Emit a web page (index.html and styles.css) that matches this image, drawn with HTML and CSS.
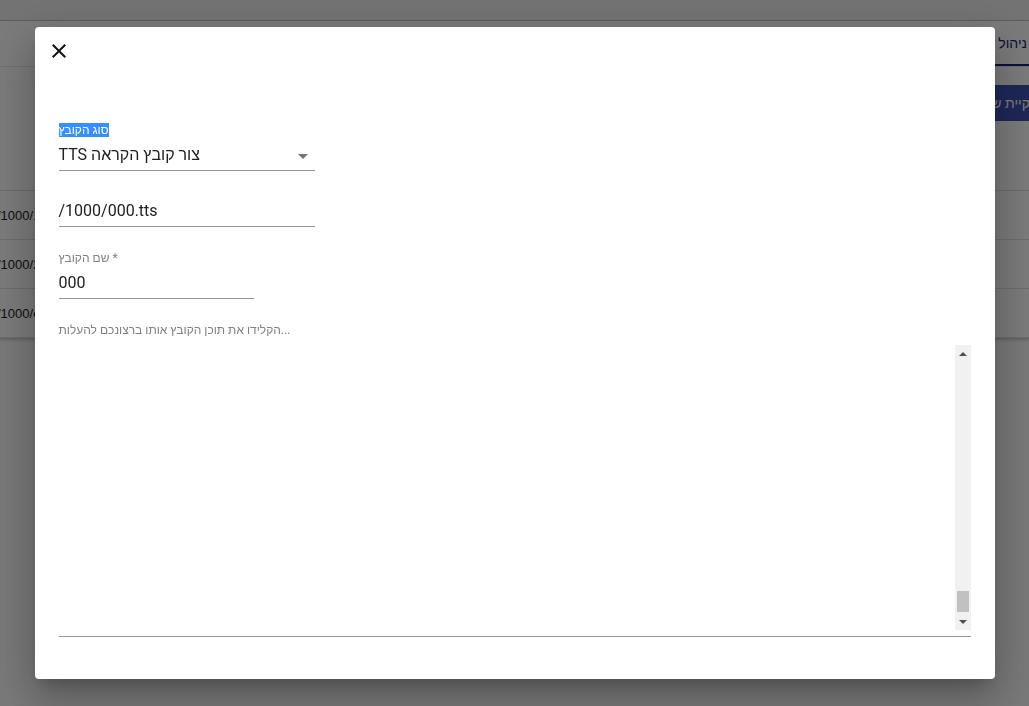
FILE: index.html
```html
<!DOCTYPE html>
<html lang="he">
<head>
    <meta charset="UTF-8">
    <meta name="viewport" content="width=device-width, initial-scale=1.0">
    <title>ניהול קבצים</title>
    <link rel="stylesheet" href="styles.css">
</head>
<body>
    <div class="page" dir="rtl">
        <div class="topbar"></div>
        <div class="card">
            <div class="tabs">
                <span class="tab active">ניהול קבצים</span>
            </div>
            <div class="toolbar">
                <button class="main-btn">ניקיית שגיאות</button>
            </div>
            <div class="table-head"></div>
            <div class="row"><span class="cell-path">/1000/1.tts</span></div>
            <div class="row"><span class="cell-path">/1000/2.tts</span></div>
            <div class="row"><span class="cell-path">/1000/ext.ini</span></div>
        </div>
    </div>

    <div class="overlay">
        <div class="dialog">
            <button class="close-btn" aria-label="סגור">
                <svg width="24" height="24" viewBox="0 0 24 24">
                    <path d="M19 6.41L17.59 5 12 10.59 6.41 5 5 6.41 10.59 12 5 17.59 6.41 19 12 13.41 17.59 19 19 17.59 13.41 12z"/>
                </svg>
            </button>

            <form class="file-form">
                <div class="field">
                    <div class="field-label"><span class="selected">סוג הקובץ</span></div>
                    <div class="field-control select">
                        <span class="value"><span dir="rtl">צור קובץ הקראה TTS</span></span>
                        <span class="arrow"></span>
                    </div>
                </div>

                <div class="field">
                    <div class="field-label"></div>
                    <div class="field-control">
                        <span class="value">/1000/000.tts</span>
                    </div>
                </div>

                <div class="field field-short">
                    <div class="field-label">שם הקובץ *</div>
                    <div class="field-control">
                        <span class="value">000</span>
                    </div>
                </div>

                <div class="textarea-field">
                    <div class="field-label">הקלידו את תוכן הקובץ אותו ברצונכם להעלות...</div>
                    <div class="textarea">
                        <div class="textarea-body"></div>
                        <div class="scrollbar">
                            <div class="sb-btn"><span class="tri-up"></span></div>
                            <div class="sb-track"><div class="sb-thumb"></div></div>
                            <div class="sb-btn"><span class="tri-down"></span></div>
                        </div>
                    </div>
                </div>
            </form>
        </div>
    </div>
</body>
</html>
```

FILE: styles.css
```css
html, body {
    margin: 0;
    padding: 0;
    overflow: hidden;
}
body {
    font-family: Roboto, "Liberation Sans", Arial, sans-serif;
    background-color: #fafafa;
    width: 1029px;
    height: 706px;
}
.page {
    width: 1029px;
}
.topbar {
    height: 20px;
    background-color: #f0f0f0;
    border-bottom: 1px solid #c6c6c6;
}
.card {
    background-color: white;
    border-bottom: 1px solid #d0d0d0;
    box-shadow: 0 1px 3px rgba(0,0,0,0.2);
}
.tabs {
    height: 45px;
    border-bottom: 1px solid #e6e6e6;
    display: flex;
}
.tab {
    padding: 0 2px 0 16px;
    font-size: 14px;
    line-height: 45px;
    color: #1a237e;
}
.tab.active {
    border-bottom: 2px solid #1a237e;
    height: 43px;
}
.toolbar {
    height: 56px;
    padding-top: 18px;
    box-sizing: border-box;
    display: flex;
}
.main-btn {
    margin-right: -40px;
    width: 160px;
    height: 36px;
    border: none;
    border-radius: 4px;
    background-color: #3f51b5;
    color: white;
    font-family: inherit;
    font-size: 14px;
    text-align: right;
    padding: 0 30px 0 0;
}
.table-head {
    height: 67px;
    border-bottom: 1px solid #e0e0e0;
}
.row {
    height: 48px;
    border-bottom: 1px solid #e0e0e0;
    display: flex;
    align-items: center;
    justify-content: flex-end;
}
.cell-path {
    direction: ltr;
    font-family: "Liberation Sans", Arial, sans-serif;
    font-size: 13px;
    color: #222;
    margin-left: -3px;
}

/* dialog */
.overlay {
    position: fixed;
    inset: 0;
    background-color: rgba(0,0,0,0.52);
    display: flex;
    align-items: center;
    justify-content: center;
}
.dialog {
    width: 960px;
    height: 652px;
    box-sizing: border-box;
    background-color: white;
    border-radius: 4px;
    padding: 12px 24px;
    box-shadow: 0 11px 15px -7px rgba(0,0,0,0.2), 0 24px 38px 3px rgba(0,0,0,0.14), 0 9px 46px 8px rgba(0,0,0,0.12);
}
.close-btn {
    display: block;
    width: 24px;
    height: 24px;
    margin-left: -12px;
    padding: 0;
    border: none;
    background: none;
}
.close-btn svg {
    display: block;
    fill: #111;
}
.file-form {
    margin-top: 60px;
}
.field {
    width: 256px;
    margin-bottom: 8px;
}
.field-short {
    width: 195px;
    margin-top: 24px;
}
.field-label {
    height: 14px;
    font-size: 12px;
    line-height: 14px;
    color: #808080;
}
.selected {
    background-color: #3390ff;
    color: white;
}
.field-control {
    display: flex;
    align-items: center;
    padding: 8px 0 5px;
    border-bottom: 1px solid #949494;
}
.value {
    flex: 1;
    font-size: 16px;
    line-height: 20px;
    color: #212121;
}
.arrow {
    width: 0;
    height: 0;
    border-left: 5px solid transparent;
    border-right: 5px solid transparent;
    border-top: 5px solid #757575;
    margin: 2px 7px 0 0;
}
.textarea-field {
    margin-top: 24px;
}
.textarea {
    display: flex;
    height: 285px;
    margin-top: 8px;
    padding-bottom: 6px;
    border-bottom: 1px solid #949494;
}
.textarea-body {
    flex: 1;
}
.scrollbar {
    width: 16px;
    display: flex;
    flex-direction: column;
    background-color: #f1f1f1;
}
.sb-btn {
    height: 17px;
    display: flex;
    align-items: center;
    justify-content: center;
}
.tri-up, .tri-down {
    width: 0;
    height: 0;
    border-left: 4px solid transparent;
    border-right: 4px solid transparent;
}
.tri-up {
    border-bottom: 4px solid #505050;
}
.tri-down {
    border-top: 4px solid #505050;
}
.sb-track {
    flex: 1;
    display: flex;
    flex-direction: column;
    justify-content: flex-end;
}
.sb-thumb {
    height: 21px;
    margin: 0 2px 1px;
    background-color: #c1c1c1;
}
```
